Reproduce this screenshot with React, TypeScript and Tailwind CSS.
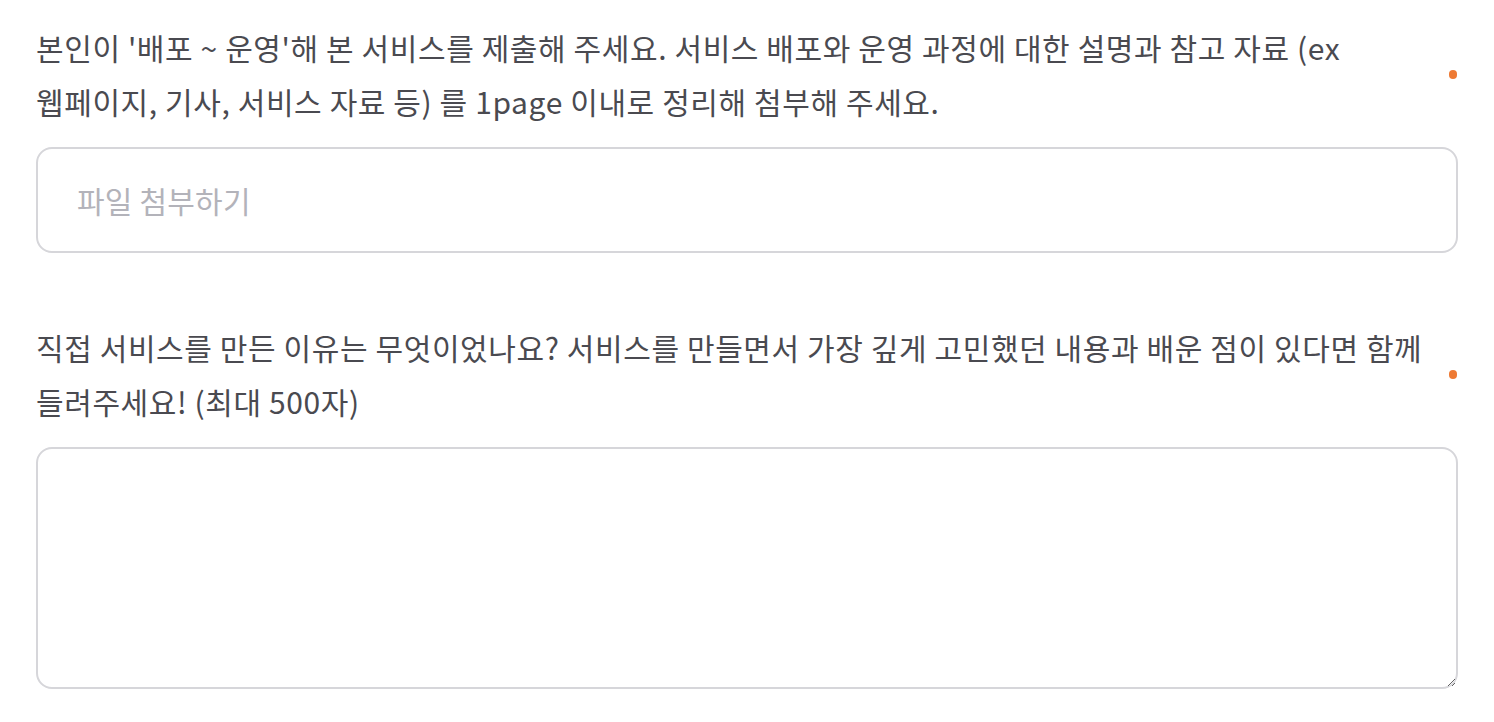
import React from "react";

const font = { fontFamily: '"Noto Sans CJK KR", "Noto Sans", sans-serif' };

function Label({ children }: { children: React.ReactNode }) {
  return (
    <div className="flex items-center justify-between">
      <p className="w-[1400px] break-keep text-[30px] leading-[54px] text-[#4a4a50] tracking-[0.6px]">{children}</p>
      <span className="mr-[1px] h-[9px] w-[8px] rounded-full bg-[#ee7a34]" />
    </div>
  );
}

export default function App() {
  return (
    <div className="min-h-[722px] bg-white px-[36px] pt-[20px]" style={font}>
      <Label>
        본인이 '배포 ~ 운영'해 본 서비스를 제출해 주세요. 서비스 배포와 운영 과정에 대한 설명과 참고 자료 (ex
        웹페이지, 기사, 서비스 자료 등) 를 1page 이내로 정리해 첨부해 주세요.
      </Label>
      <div className="mt-[19px] flex h-[106px] items-center rounded-[16px] border-2 border-[#d6d6da] px-[39px] text-[30px] text-[#b3b3ba] tracking-[0.2px]">
        파일 첨부하기
      </div>
      <div className="mt-[67px]">
        <Label>
          직접 서비스를 만든 이유는 무엇이었나요? 서비스를 만들면서 가장 깊게 고민했던 내용과 배운 점이 있다면 함께
          들려주세요! (최대 500자)
        </Label>
      </div>
      <textarea
        className="mt-[19px] block h-[242px] w-full rounded-[16px] border-2 border-[#d6d6da] px-[39px] py-[20px] text-[30px] text-[#4a4a50] outline-none"
        style={font}
      />
    </div>
  );
}
